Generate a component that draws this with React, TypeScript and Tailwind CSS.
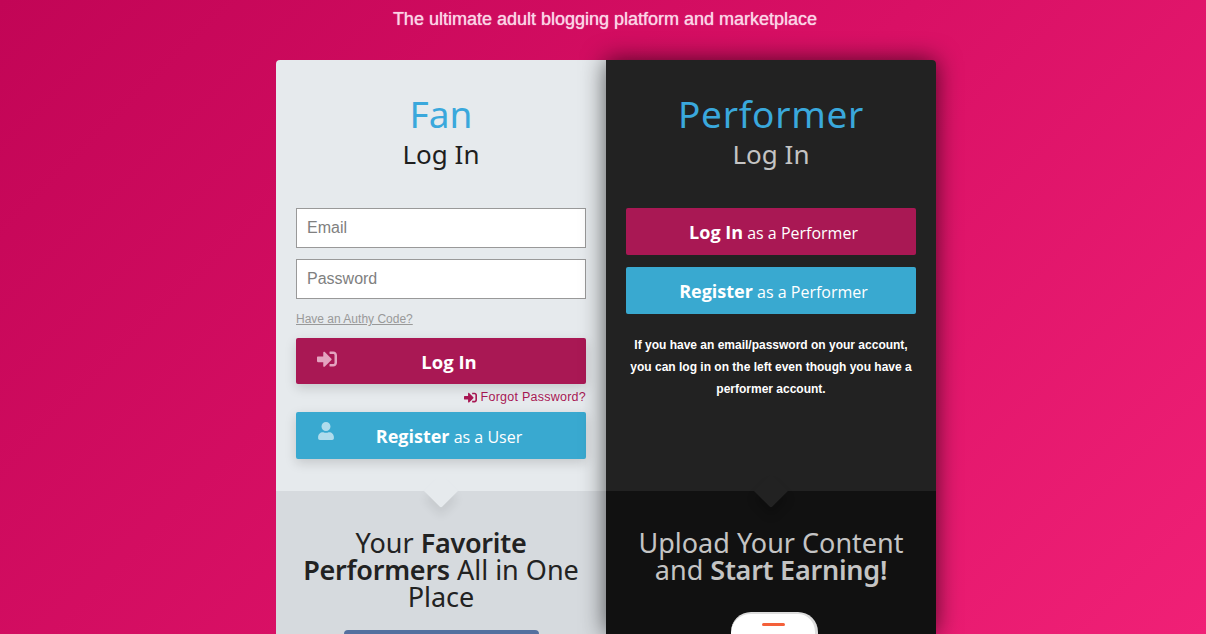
import React from "react";
import { FaSignInAlt, FaUser } from "react-icons/fa";

const head = "font-['Noto_Sans','Open_Sans',sans-serif]";
const btn = "font-['Open_Sans','Noto_Sans',sans-serif]";

export default function App() {
  return (
    <div className="h-[634px] overflow-hidden bg-[linear-gradient(135deg,#c20556_0%,#d91065_50%,#f02076_100%)] font-['Liberation_Sans',sans-serif]">
      <p className="h-[60px] pl-[4px] pt-[8px] text-center text-[18px] leading-[22px] text-[#fbd5e5] [text-shadow:0_0_1px_#fbd5e5]">
        The ultimate adult blogging platform and marketplace
      </p>
      <div className="ml-[276px] flex w-[660px] rounded-[4px]">
        {/* Fan */}
        <div className="flex w-[330px] flex-col overflow-hidden rounded-tl-[4px]">
          <div className="h-[431px] bg-[#e6eaed] px-[20px]">
            <div className={`${head} pt-[31px] text-center`}>
              <h1 className="text-[37px] leading-[46px] text-[#3aa8dc]">Fan</h1>
              <h2 className="text-[26px] leading-[34px] text-[#1e1e1e]">Log In</h2>
            </div>
            <input
              placeholder="Email"
              className="mt-[37px] block h-[40px] w-[290px] border border-[#999999] bg-white px-[10px] text-[16px] placeholder:text-[#808080]"
            />
            <input
              placeholder="Password"
              className="mt-[11px] block h-[40px] w-[290px] border border-[#999999] bg-white px-[10px] text-[16px] placeholder:text-[#808080]"
            />
            <a className="mt-[13px] block text-[12px] leading-[14px] text-[#999999] underline">Have an Authy Code?</a>
            <button className={`${btn} relative mt-[12px] block h-[46px] w-[290px] rounded-[2px] bg-[#a91854] pl-[16px] pt-[2px] text-[18.5px] font-bold text-white shadow-[0_4px_12px_rgba(0,0,0,0.15)]`}>
              <FaSignInAlt className="absolute left-[21px] top-[11px] text-[20px] text-[#e4a4c0]" />
              Log In
            </button>
            <a className="mt-[4px] flex h-[18px] items-center justify-end gap-[4px] text-[12.5px] tracking-[0.25px] text-[#a91854]">
              <FaSignInAlt className="text-[13px]" />
              Forgot Password?
            </a>
            <button className={`${btn} relative mt-[6px] block h-[47px] w-[290px] rounded-[2px] bg-[#39a9d0] pl-[16px] pt-[2px] text-[16px] text-white shadow-[0_4px_12px_rgba(0,0,0,0.15)]`}>
              <FaUser className="absolute left-[21px] top-[10px] text-[18px] text-[#b0dcec]" />
              <b className="text-[18px]">Register</b> as a User
            </button>
          </div>
          <div className="relative h-[143px] bg-[#d6dade] px-[20px] pt-[38px]">
            <div className="absolute left-[153px] top-[-12px] h-[24px] w-[24px] rotate-45 rounded-br-[2px] bg-[#e6eaed] shadow-[6px_6px_10px_rgba(0,0,0,0.07)]" />
            <p className={`${head} relative text-center text-[27px] leading-[27px] text-[#222222]`}>
              Your <b className="font-semibold tracking-[-0.25px]">Favorite Performers</b> All in One Place
            </p>
            <div className="mx-auto mt-[20px] h-[30px] w-[195px] rounded-t-[4px] bg-[#54709f]" />
          </div>
        </div>
        {/* Performer */}
        <div className="relative flex w-[330px] flex-col overflow-hidden rounded-tr-[4px] shadow-[0_0_24px_rgba(0,0,0,0.65)]">
          <div className="h-[431px] bg-[#222222] px-[20px]">
            <div className={`${head} pt-[31px] text-center`}>
              <h1 className="text-[37px] leading-[46px] tracking-[0.7px] text-[#3aa8dc]">Performer</h1>
              <h2 className="text-[26px] leading-[34px] text-[#c4c4c4]">Log In</h2>
            </div>
            <button className={`${btn} mt-[37px] block h-[47px] w-[290px] rounded-[2px] bg-[#a91854] pl-[5px] pt-[2px] text-[16px] text-white`}>
              <b className="text-[18px]">Log In</b> as a Performer
            </button>
            <button className={`${btn} mt-[12px] block h-[47px] w-[290px] rounded-[2px] bg-[#39a9d0] pl-[5px] pt-[2px] text-[16px] text-white`}>
              <b className="text-[18px]">Register</b> as a Performer
            </button>
            <p className="mt-[20px] text-center text-[12px] font-bold leading-[22px] text-white">
              If you have an email/password on your account, you can log in on the left even though you have a performer account.
            </p>
          </div>
          <div className="relative h-[143px] bg-[#111111] px-[20px] pt-[38px]">
            <div className="absolute left-[153px] top-[-12px] h-[24px] w-[24px] rotate-45 rounded-br-[2px] bg-[#222222] shadow-[6px_6px_10px_rgba(0,0,0,0.2)]" />
            <p className={`${head} relative text-center text-[27px] leading-[27px] text-[#c4c4c4]`}>
              Upload Your Content and <b className="font-semibold tracking-[-0.25px]">Start Earning!</b>
            </p>
            <div className="ml-[105px] mt-[29px] flex h-[40px] w-[87px] justify-center rounded-t-[20px] border-r-[3px] border-t-[2px] border-[#dddddd] bg-white pt-[9px]">
              <div className="h-[3px] w-[23px] rounded-full bg-[#f4603a]" />
            </div>
          </div>
        </div>
      </div>
    </div>
  );
}
